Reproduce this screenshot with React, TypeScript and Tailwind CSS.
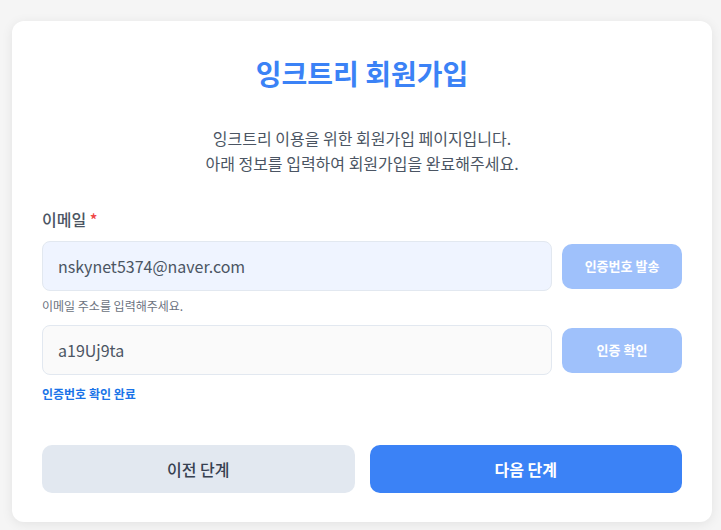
import React from "react";

export default function App() {
  return (
    <div
      className="min-h-[530px] w-full bg-[#f5f5f5] pt-[21px] pl-[12px]"
      style={{ fontFamily: '"Noto Sans CJK KR", "Noto Sans", sans-serif' }}
    >
      <div className="w-[700px] rounded-[12px] bg-white px-[30px] pt-[34px] pb-[29px] shadow-[0_2px_12px_rgba(0,0,0,0.08)]">
        <h1 className="text-center text-[28px] leading-[36px] font-bold text-[#3b82f6]">잉크트리 회원가입</h1>
        <div className="mt-[35px] text-center text-[16px] leading-[25px] text-[#4b5563]">
          <p>잉크트리 이용을 위한 회원가입 페이지입니다.</p>
          <p>아래 정보를 입력하여 회원가입을 완료해주세요.</p>
        </div>
        <div className="mt-[32px] text-[16px] leading-[22px] font-medium text-[#4b5563]">
          이메일 <span className="text-[#ef4444]">*</span>
        </div>
        <div className="mt-[11px] flex items-center gap-[10px]">
          <div className="flex h-[50px] flex-1 items-center rounded-[8px] border border-[#e2e8f0] bg-[#eff4ff] px-[15px] text-[16px] text-[#4b5563]">
            nskynet5374@naver.com
          </div>
          <button className="h-[45px] w-[120px] rounded-[10px] bg-[#9fc1fb] text-[13px] font-bold text-white">
            인증번호 발송
          </button>
        </div>
        <div className="mt-[6px] text-[12px] leading-[18px] text-[#6b7280]">이메일 주소를 입력해주세요.</div>
        <div className="mt-[10px] flex items-center gap-[10px]">
          <div className="flex h-[50px] flex-1 items-center rounded-[8px] border border-[#e2e8f0] bg-[#fafafa] px-[15px] text-[16px] text-[#4b5563]">
            a19Uj9ta
          </div>
          <button className="h-[45px] w-[120px] rounded-[10px] bg-[#9fc1fb] text-[13px] font-bold text-white">
            인증 확인
          </button>
        </div>
        <div className="mt-[10px] text-[12px] leading-[18px] font-bold text-[#1a73e8]">인증번호 확인 완료</div>
        <div className="mt-[42px] flex gap-[15px]">
          <button className="h-[48px] flex-1 rounded-[10px] bg-[#e2e8f0] text-[16px] font-medium text-[#374151]">
            이전 단계
          </button>
          <button className="h-[48px] flex-1 rounded-[10px] bg-[#3b82f6] text-[16px] font-bold text-white">
            다음 단계
          </button>
        </div>
      </div>
    </div>
  );
}
